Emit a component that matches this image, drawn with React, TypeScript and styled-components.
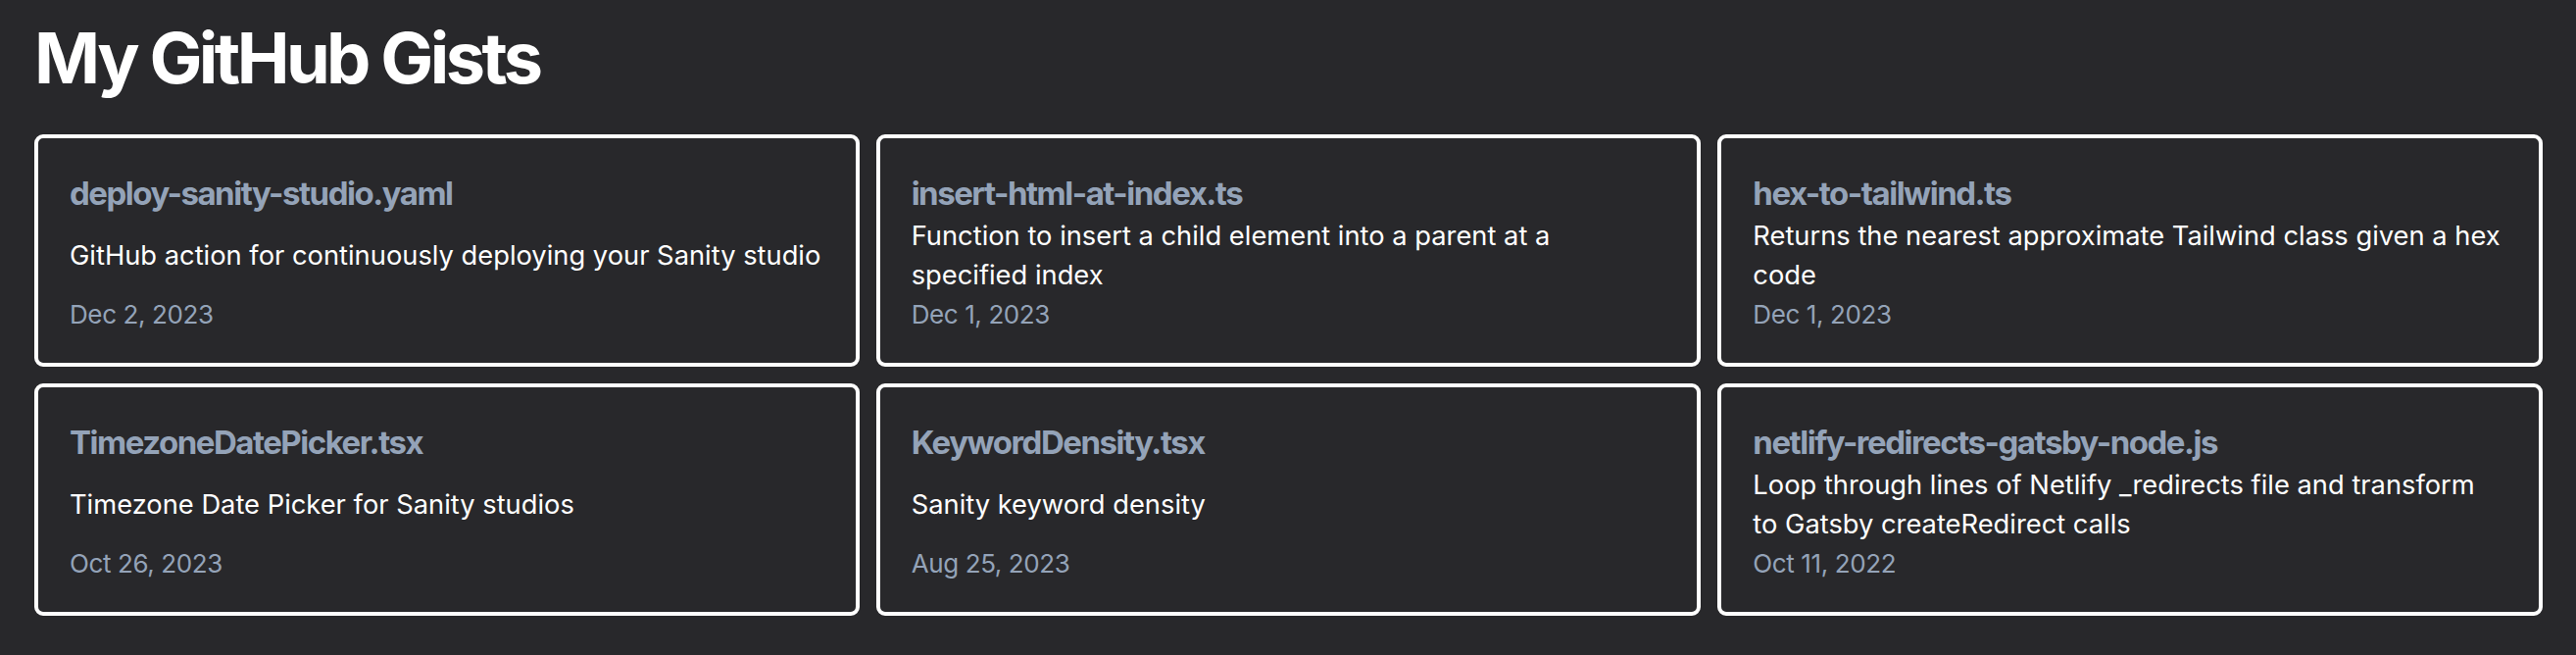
import React from 'react';
import styled, { createGlobalStyle } from 'styled-components';

type Gist = {
  file: string;
  description: string;
  date: string;
};

// line breaks follow the wrapping in the design
const gists: Gist[] = [
  {
    file: 'deploy-sanity-studio.yaml',
    description: 'GitHub action for continuously deploying your Sanity studio',
    date: 'Dec 2, 2023',
  },
  {
    file: 'insert-html-at-index.ts',
    description: 'Function to insert a child element into a parent at a\nspecified index',
    date: 'Dec 1, 2023',
  },
  {
    file: 'hex-to-tailwind.ts',
    description: 'Returns the nearest approximate Tailwind class given a hex\ncode',
    date: 'Dec 1, 2023',
  },
  {
    file: 'TimezoneDatePicker.tsx',
    description: 'Timezone Date Picker for Sanity studios',
    date: 'Oct 26, 2023',
  },
  {
    file: 'KeywordDensity.tsx',
    description: 'Sanity keyword density',
    date: 'Aug 25, 2023',
  },
  {
    file: 'netlify-redirects-gatsby-node.js',
    description: 'Loop through lines of Netlify _redirects file and transform\nto Gatsby createRedirect calls',
    date: 'Oct 11, 2022',
  },
];

const GlobalStyle = createGlobalStyle`
  html, body {
    margin: 0;
    background: #28282b;
  }
  body {
    font-family: Inter, "Noto Sans", "Liberation Sans", sans-serif;
    color: #fff;
    -webkit-font-smoothing: antialiased;
  }
`;

const Page = styled.main`
  min-height: 668px;
  box-sizing: border-box;
  padding: 19px 34px 0 35px;
`;

const Heading = styled.h1`
  margin: 0 0 38px;
  font-size: 72px;
  line-height: 80px;
  font-weight: 700;
  letter-spacing: -0.05em;
`;

const Grid = styled.div`
  display: grid;
  grid-template-columns: repeat(3, 1fr);
  gap: 17px;
`;

const Card = styled.a`
  display: flex;
  flex-direction: column;
  justify-content: space-between;
  box-sizing: border-box;
  padding: 32px 32px 29px;
  border: 4px solid #fff;
  border-radius: 9px;
  color: inherit;
  text-decoration: none;
`;

const FileName = styled.h2`
  margin: 0;
  font-size: 33px;
  line-height: 48px;
  font-weight: 700;
  letter-spacing: -0.045em;
  color: #94a3b8;
`;

const Description = styled.p`
  margin: 0;
  font-size: 27.3px;
  line-height: 40px;
  white-space: pre-line;
  color: #fff;
`;

const DateText = styled.span`
  font-size: 26px;
  line-height: 40px;
  letter-spacing: -0.015em;
  color: #94a3b8;
`;

export default function App() {
  return (
    <>
      <GlobalStyle />
      <Page>
        <Heading>My GitHub Gists</Heading>
        <Grid>
          {gists.map((g) => (
            <Card key={g.file} href="#">
              <FileName>{g.file}</FileName>
              <Description>{g.description}</Description>
              <DateText>{g.date}</DateText>
            </Card>
          ))}
        </Grid>
      </Page>
    </>
  );
}
